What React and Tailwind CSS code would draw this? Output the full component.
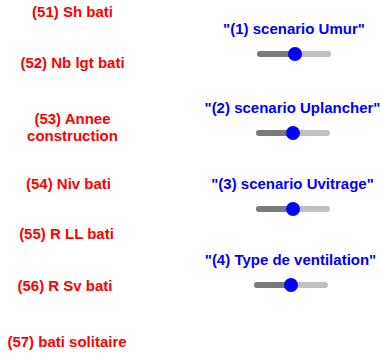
import React from "react";

const labels = [
  { text: "(51) Sh bati", mt: "mt-[3px]", shift: "" },
  { text: "(52) Nb lgt bati", mt: "mt-[34px]", shift: "" },
  { text: "(53) Annee construction", mt: "mt-[39px]", shift: "", wrap: true },
  { text: "(54) Niv bati", mt: "mt-[31px]", shift: "mr-[8px]" },
  { text: "(55) R LL bati", mt: "mt-[33px]", shift: "mr-[12px]" },
  { text: "(56) R Sv bati", mt: "mt-[35px]", shift: "mr-[15px]" },
  { text: "(57) bati solitaire", mt: "mt-[39px]", shift: "mr-[11px]" },
];

const scenarios = [
  { title: '"(1) scenario Umur"', mt: "mt-[20px]", shift: "pl-[3px]", value: 52 },
  { title: '"(2) scenario Uplancher"', mt: "mt-[38px]", shift: "", value: 51 },
  { title: '"(3) scenario Uvitrage"', mt: "mt-[35px]", shift: "", value: 51 },
  { title: '"(4) Type de ventilation"', mt: "mt-[35px]", shift: "pr-[4px]", value: 51 },
];

function Slider({ value }) {
  return (
    <div className="relative mt-[10px] h-[14px] w-[74px]">
      <div className="absolute left-0 right-0 top-[4px] h-[6px] rounded-full bg-[#c0c0c0]" />
      <div
        className="absolute left-0 top-[4px] h-[6px] rounded-l-full bg-[#7a7a7a]"
        style={{ width: `${value}%` }}
      />
      <div
        className="absolute top-0 h-[14px] w-[14px] -translate-x-1/2 rounded-full bg-[#0000ff]"
        style={{ left: `${value}%` }}
      />
    </div>
  );
}

export default function App() {
  return (
    <div className="flex h-[356px] w-[381px] overflow-hidden bg-white font-['Liberation_Sans',Arial,sans-serif] text-[15px] font-bold leading-[17px]">
      {/* left column: red labels */}
      <div className="flex w-[145px] flex-col items-center text-center text-[#ff0000]">
        {labels.map((l) => (
          <div key={l.text} className={`${l.mt} ${l.shift} ${l.wrap ? "w-[100px]" : "whitespace-nowrap"}`}>
            {l.text}
          </div>
        ))}
      </div>

      {/* right column: scenario sliders */}
      <div className="ml-auto flex w-[177px] flex-col text-[#0000ff]">
        {scenarios.map((s) => (
          <div key={s.title} className={`${s.mt} ${s.shift} flex flex-col items-center`}>
            <div className="whitespace-nowrap">{s.title}</div>
            <Slider value={s.value} />
          </div>
        ))}
      </div>
    </div>
  );
}
